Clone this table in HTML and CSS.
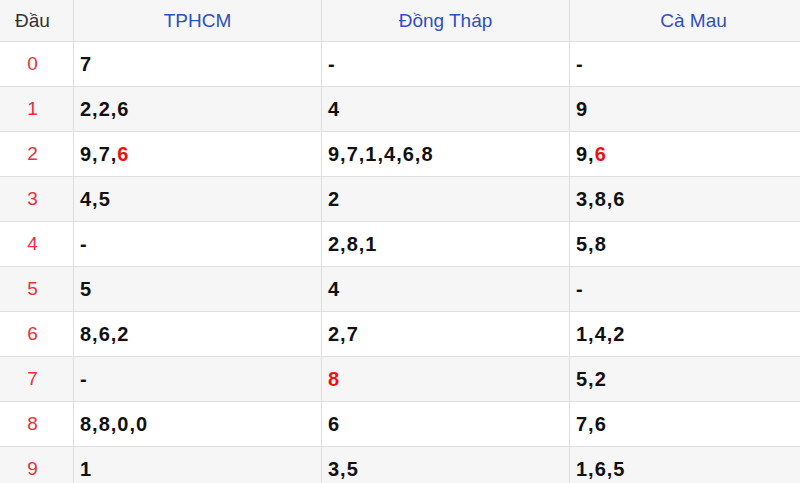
FILE: index.html
```html
<!DOCTYPE html>
<html lang="vi">
<head>
<meta charset="utf-8">
<title>Đầu</title>
<link rel="stylesheet" href="styles.css">
</head>
<body>
<div class="table">
  <div class="cell head first">Đầu</div>
  <div class="cell head">TPHCM</div>
  <div class="cell head">Đồng Tháp</div>
  <div class="cell head">Cà Mau</div>

  <div class="cell first">0</div>
  <div class="cell num">7</div>
  <div class="cell num">-</div>
  <div class="cell num">-</div>

  <div class="cell first alt">1</div>
  <div class="cell num alt">2,2,6</div>
  <div class="cell num alt">4</div>
  <div class="cell num alt">9</div>

  <div class="cell first">2</div>
  <div class="cell num">9,7,<span class="hl">6</span></div>
  <div class="cell num">9,7,1,4,6,8</div>
  <div class="cell num">9,<span class="hl">6</span></div>

  <div class="cell first alt">3</div>
  <div class="cell num alt">4,5</div>
  <div class="cell num alt">2</div>
  <div class="cell num alt">3,8,6</div>

  <div class="cell first">4</div>
  <div class="cell num">-</div>
  <div class="cell num">2,8,1</div>
  <div class="cell num">5,8</div>

  <div class="cell first alt">5</div>
  <div class="cell num alt">5</div>
  <div class="cell num alt">4</div>
  <div class="cell num alt">-</div>

  <div class="cell first">6</div>
  <div class="cell num">8,6,2</div>
  <div class="cell num">2,7</div>
  <div class="cell num">1,4,2</div>

  <div class="cell first alt">7</div>
  <div class="cell num alt">-</div>
  <div class="cell num alt"><span class="hl">8</span></div>
  <div class="cell num alt">5,2</div>

  <div class="cell first">8</div>
  <div class="cell num">8,8,0,0</div>
  <div class="cell num">6</div>
  <div class="cell num">7,6</div>

  <div class="cell first alt">9</div>
  <div class="cell num alt">1</div>
  <div class="cell num alt">3,5</div>
  <div class="cell num alt">1,6,5</div>
</div>
</body>
</html>
```

FILE: styles.css
```css
html, body {
  margin: 0;
  padding: 0;
  background: #ffffff;
  overflow: hidden;
}

body {
  font-family: "Liberation Sans", Arial, sans-serif;
  width: 800px;
  height: 483px;
}

.table {
  display: grid;
  grid-template-columns: 74px 248px 248px 248px;
  grid-auto-rows: 45px;
  grid-template-rows: 42px;
  width: 818px;
}

.cell {
  box-sizing: border-box;
  border-right: 1px solid #dedede;
  border-bottom: 1px solid #dedede;
  display: flex;
  align-items: center;
  padding: 0 0 0 6px;
  background: #ffffff;
  white-space: nowrap;
}

.cell.alt {
  background: #f6f6f6;
}

.head {
  background: #f6f6f6;
  justify-content: center;
  font-size: 19px;
  color: #2f4fc4;
  padding: 0;
}

.head.first {
  color: #333333;
}

.first {
  justify-content: center;
  padding: 0 8px 0 0;
  font-size: 19px;
  color: #ec2e3a;
}

.num {
  font-size: 20px;
  font-weight: bold;
  letter-spacing: 1px;
  color: #111111;
}

.hl {
  color: #ee1111;
}
```
